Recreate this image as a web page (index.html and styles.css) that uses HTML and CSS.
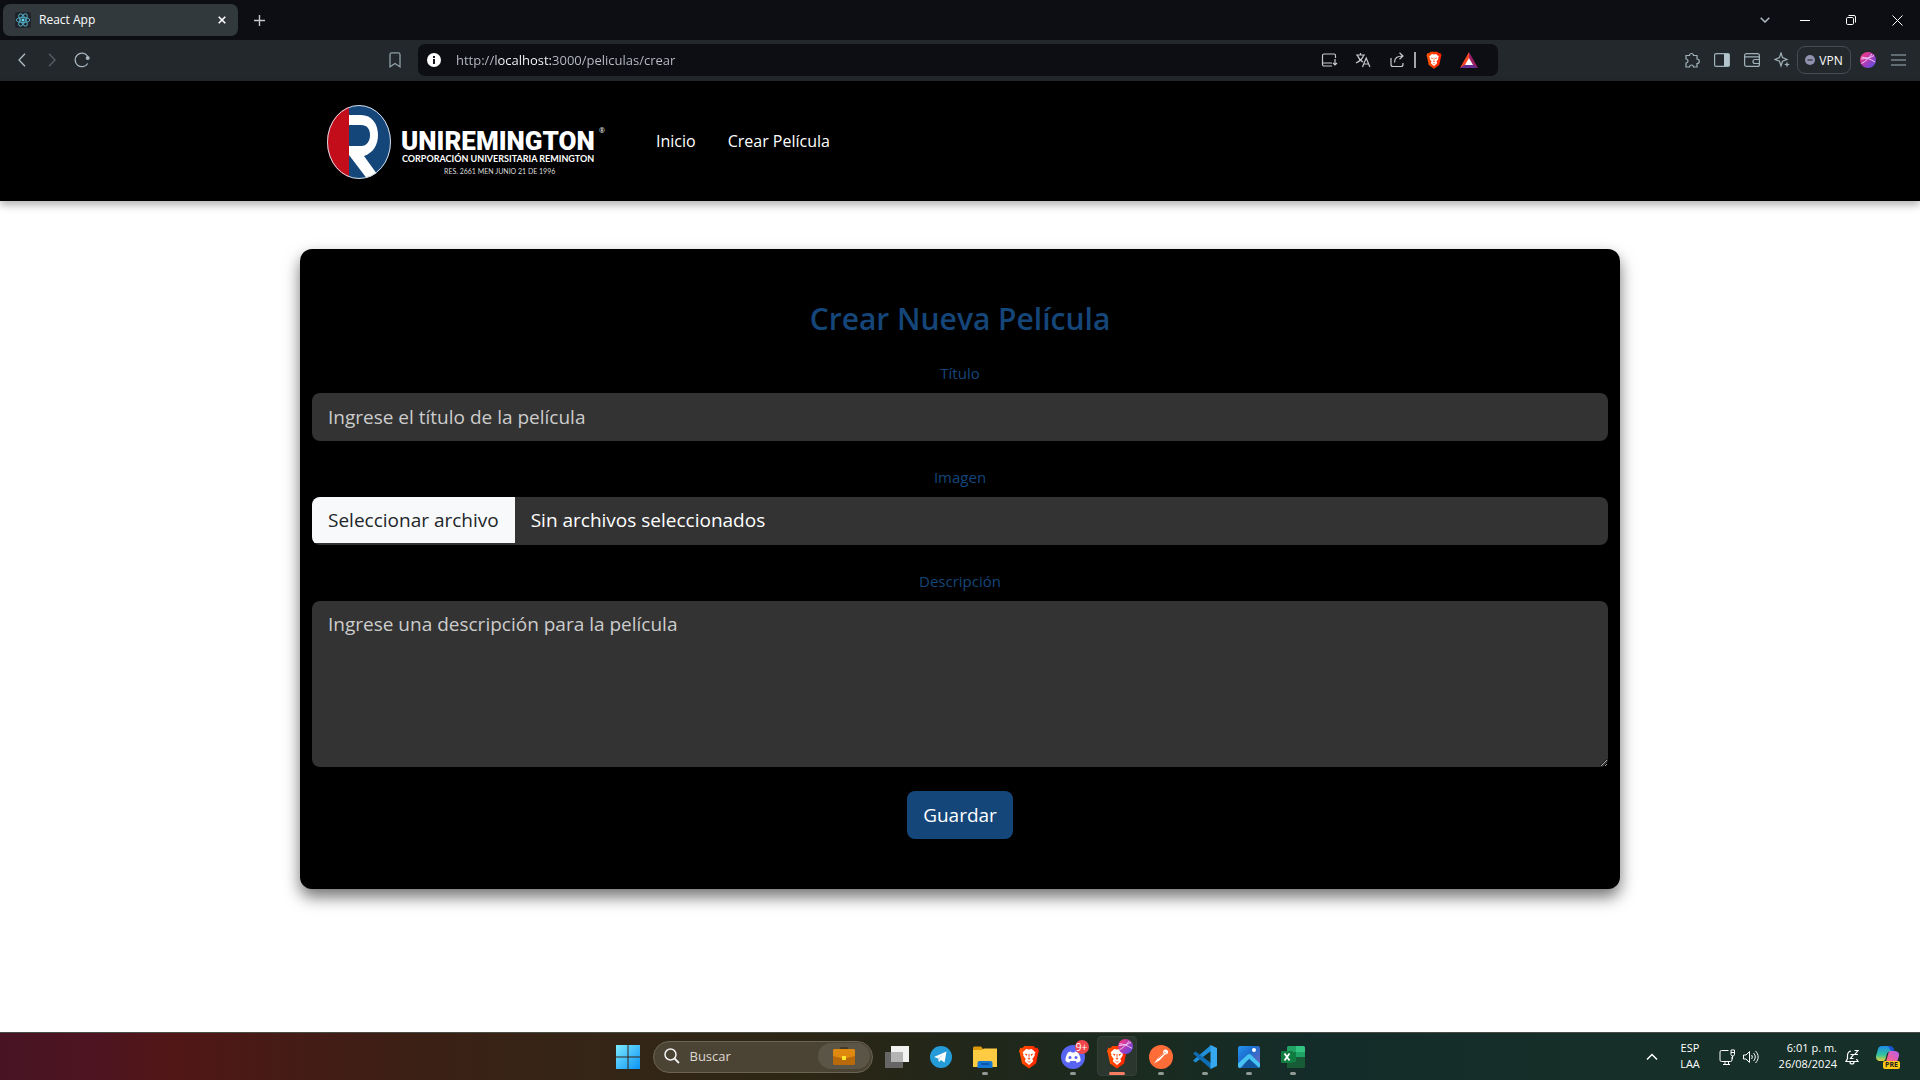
FILE: index.html
```html
<!DOCTYPE html>
<html lang="es">
<head>
<meta charset="utf-8">
<meta name="viewport" content="width=device-width, initial-scale=1">
<title>React App</title>
<link rel="stylesheet" href="styles.css">
</head>
<body>
<svg class="sprite" aria-hidden="true">
  <defs>
    <linearGradient id="orb" x1="0" y1="0" x2="1" y2="1"><stop offset="0.2" stop-color="#e8388c"/><stop offset="0.6" stop-color="#9a3fc4"/><stop offset="1" stop-color="#4a54e8"/></linearGradient>
    <linearGradient id="braveFill" x1="0" y1="0" x2="1" y2="0"><stop offset="0" stop-color="#ff5500"/><stop offset="1" stop-color="#ff2000"/></linearGradient>
    <symbol id="brave" viewBox="0 0 20 24">
      <path d="M5.500 1h9L16.500 3l2-.2L20 6l-.8 2.200L17 18.500 10 23.500 3 18.500.8 8.200 0 6l1.500-3.200 2 .2z" fill="url(#braveFill)"/>
      <path d="M10 4.500l2.800-.5 3.700 3.500-1 1.500.3 1.500-2.500 3.500 1 2-1.500 1.500-2.800 2.500-2.800-2.500-1.500-1.500 1-2-2.500-3.500.3-1.500-1-1.500L7.200 4z" fill="#fff"/>
      <path d="M5.500 8.500l3 .8-1 1.700zM14.500 8.500l-3 .8 1 1.700zM9.500 9h1l-.2 4 1.200.8-1.500 1-1.500-1 1.200-.8zM7.500 15.500l2.500 1.200 2.500-1.200-2.500 2.200z" fill="#ff4a10"/>
    </symbol>
    <symbol id="profile" viewBox="0 0 16 16">
      <circle cx="8" cy="8" r="8" fill="url(#orb)"/>
      <path d="M1.500 5c4 .5 8 1.500 13.500 5M1.500 11.500C5 10 9 6 12 2M1 7c5-.5 9-1 13-3.500" fill="none" stroke="#f3c8f5"/>
    </symbol>
  </defs>
</svg>

<div class="desktop">
  <header class="browser">
    <div class="tabstrip">
      <div class="tab">
        <svg class="favicon" viewBox="0 0 16 16"><rect width="16" height="16" rx="2" fill="#20232a"/><g fill="none" stroke="#4fa9bf"><ellipse cx="8" cy="8" rx="6.800" ry="2.600"/><ellipse cx="8" cy="8" rx="6.800" ry="2.600" transform="rotate(60 8 8)"/><ellipse cx="8" cy="8" rx="6.800" ry="2.600" transform="rotate(120 8 8)"/></g><circle cx="8" cy="8" r="1.500" fill="#61dafb"/></svg>
        <span class="tab-title">React App</span>
        <button class="tab-close" aria-label="Cerrar pestaña"><svg width="8" height="8" viewBox="0 0 8 8"><path d="M.7.7l6.600 6.600M7.300.7L.7 7.300" stroke="#fff" stroke-width="1.600"/></svg></button>
      </div>
      <button class="newtab" aria-label="Nueva pestaña"><svg width="11" height="11" viewBox="0 0 11 11"><path d="M5.500 0v11M0 5.500h11" stroke="#c4c7cb" stroke-width="1.400"/></svg></button>
      <div class="window-controls">
        <button class="list-tabs" aria-label="Buscar pestañas"><svg width="10" height="6" viewBox="0 0 10 6"><path d="M.7.7L5 5 9.300.7" fill="none" stroke="#b0bcc4" stroke-width="1.500"/></svg></button>
        <button aria-label="Minimizar"><svg width="10" height="10" viewBox="0 0 10 10"><path d="M0 5.500h10" stroke="#fff"/></svg></button>
        <button aria-label="Restaurar"><svg width="10" height="10" viewBox="0 0 10 10" fill="none" stroke="#fff"><rect x=".5" y="2.500" width="7" height="7" rx="1.200"/><path d="M2.500.5H8a1.500 1.500 0 0 1 1.500 1.500v5.500"/></svg></button>
        <button aria-label="Cerrar"><svg width="11" height="11" viewBox="0 0 11 11"><path d="M.5.5l10 10M10.500.5l-10 10" stroke="#fff"/></svg></button>
      </div>
    </div>

    <div class="toolbar">
      <div class="nav-buttons">
        <button aria-label="Atrás"><svg width="8" height="14" viewBox="0 0 8 14"><path d="M7 .7L1 7l6 6.300" fill="none" stroke="#b0bec5" stroke-width="1.300"/></svg></button>
        <button aria-label="Adelante"><svg width="8" height="14" viewBox="0 0 8 14"><path d="M1 .7L7 7l-6 6.300" fill="none" stroke="#566068" stroke-width="1.300"/></svg></button>
        <button aria-label="Recargar"><svg width="16" height="16" viewBox="0 0 16 16"><path d="M13.700 11.500A6.800 6.800 0 1 1 13.500 4" fill="none" stroke="#a9b8c0" stroke-width="1.300"/><circle cx="13.700" cy="6" r="2" fill="#a9b8c0"/></svg></button>
      </div>
      <div class="location">
        <button class="bookmark" aria-label="Marcador"><svg width="12" height="16" viewBox="0 0 12 16"><path d="M1 2.500A1.800 1.800 0 0 1 2.800.8h6.400A1.800 1.800 0 0 1 11 2.500v12.300L6 11.500l-5 3.300z" fill="none" stroke="#8fa0a8" stroke-width="1.300"/></svg></button>
        <div class="omnibox">
          <svg class="site-info" width="14" height="14" viewBox="0 0 14 14"><circle cx="7" cy="7" r="7" fill="#fff"/><path d="M7 3v2M7 6v5" stroke="#14161b" stroke-width="2"/></svg>
          <input class="url" type="text" aria-label="Dirección" value="http://localhost:3000/peliculas/crear">
          <button aria-label="Instalar"><svg width="18" height="16" viewBox="0 0 18 16" fill="none" stroke="#c6c9cd" stroke-width="1.200"><path d="M15.500 6V3.500A1.500 1.500 0 0 0 14 2H4a1.500 1.500 0 0 0-1.500 1.500v9A1.500 1.500 0 0 0 4 14h8M2.500 11H12M15 7v6M13 11l2 2 2-2"/></svg></button>
          <button aria-label="Traducir"><svg width="16" height="16" viewBox="0 0 16 16" fill="none" stroke="#c6c9cd" stroke-width="1.200"><path d="M1 3h9M5.500 1v2M2.500 3.500C4 7 6 9 8 10M8.500 3.500C7.500 7 5 9 1 11M7.500 15l3.700-9 3.700 9M9 12h4.500"/></svg></button>
          <button aria-label="Compartir"><svg width="16" height="16" viewBox="0 0 16 16" fill="none" stroke="#c6c9cd" stroke-width="1.200"><path d="M2 6v6.500A2 2 0 0 0 4 14.500h8a2 2 0 0 0 2-2V11M5.500 10.500C5.500 6 8 4 14 4M10.500.8L14 4l-3.500 3.200"/></svg></button>
          <span class="divider"></span>
          <button class="shields" aria-label="Escudos"><svg width="16" height="18"><use href="#brave"/></svg></button>
          <button aria-label="Recompensas"><svg width="18" height="16" viewBox="0 0 18 16"><path d="M9 0L0 16l9-5z" fill="#ff4724"/><path d="M9 0l9 16-9-5z" fill="#9e1f63"/><path d="M0 16h18l-9-6z" fill="#662d91"/><path d="M9 6l-4 7h8z" fill="#fff"/></svg></button>
        </div>
      </div>
      <div class="tools">
        <button aria-label="Extensiones"><svg width="16" height="16" viewBox="0 0 16 16"><path d="M2 3.500h3.500a2 2 0 1 1 4 0H13V7a2 2 0 1 1 0 4.500V15H9.500a2 2 0 0 0-4 0H2v-4a2 2 0 0 0 0-4z" fill="none" stroke="#9fb2ba" stroke-width="1.200"/></svg></button>
        <button aria-label="Barra lateral"><svg width="16" height="14" viewBox="0 0 16 14"><rect x=".6" y=".6" width="14.800" height="12.800" rx="1.500" fill="none" stroke="#9fb2ba" stroke-width="1.200"/><path d="M10 1h5v12h-5z" fill="#b2c5cd"/></svg></button>
        <button aria-label="Cartera"><svg width="16" height="14" viewBox="0 0 16 14" fill="none" stroke="#9fb2ba" stroke-width="1.200"><rect x=".6" y=".6" width="14.800" height="12.800" rx="2"/><path d="M1 3.800h14M15 6.500h-4a2 2 0 0 0 0 4h4"/></svg></button>
        <button aria-label="Leo"><svg width="16" height="16" viewBox="0 0 16 16"><path d="M7 1l1.500 4.500L13 7.500 8.500 9.300 7 14 5.500 9.300 1 7.500l4.500-2z" fill="none" stroke="#9fb2ba" stroke-width="1.200"/><path d="M13 9.500l.8 2.200 2.200.8-2.200.8L13 15.500l-.8-2.200-2.200-.8 2.200-.8z" fill="#9fb2ba"/></svg></button>
        <button class="vpn"><svg width="10" height="10" viewBox="0 0 10 10"><circle cx="5" cy="5" r="5" fill="#8f93ad"/><path d="M2.500 5h5" stroke="#2a2e38" stroke-width="1.200"/></svg>VPN</button>
        <button class="avatar" aria-label="Perfil"><svg width="16" height="16"><use href="#profile"/></svg></button>
        <button aria-label="Menú"><svg width="15" height="12" viewBox="0 0 15 12"><path d="M0 1h15M0 6h15M0 11h15" stroke="#9fb2ba" stroke-width="1.200"/></svg></button>
      </div>
    </div>
  </header>

  <main class="page">
    <nav class="navbar">
      <div class="navbar-inner">
        <a class="brand" href="#" aria-label="Uniremington">
          <svg width="284" height="78" viewBox="0 0 284 78">
            <clipPath id="oval"><ellipse cx="35" cy="40" rx="32" ry="37"/></clipPath>
            <g clip-path="url(#oval)">
              <path d="M0 0h70v78H0z" fill="#15467a"/>
              <path d="M0 0h25v78H0z" fill="#c30d1a"/>
              <path d="M25 13h12c11 0 17 9 17 20 0 10-5 18-14 21l13 18-9 6-19-25V44h12c6 0 9-5 9-11s-3-10-9-10H25z" fill="#fff"/>
            </g>
            <ellipse cx="35" cy="40" rx="31.500" ry="36.500" fill="none" stroke="#d5dbe2"/>
            <text class="brand-name" x="77" y="48">UNIREMINGTON</text>
            <text class="brand-mark" x="275" y="31">®</text>
            <text class="brand-line" x="78" y="60">CORPORACIÓN UNIVERSITARIA REMINGTON</text>
            <text class="brand-note" x="120" y="72">RES. 2661 MEN JUNIO 21 DE 1996</text>
          </svg>
        </a>
        <a class="nav-link" href="#">Inicio</a>
        <a class="nav-link" href="#">Crear Película</a>
      </div>
    </nav>

    <form class="card">
      <h2>Crear Nueva Película</h2>
      <div class="field">
        <label for="titulo">Título</label>
        <input class="control" id="titulo" type="text" placeholder="Ingrese el título de la película">
      </div>
      <div class="field">
        <label for="imagen">Imagen</label>
        <div class="control file">
          <span class="file-button">Seleccionar archivo</span>
          <span class="file-name">Sin archivos seleccionados</span>
          <input class="file-input" id="imagen" type="file">
        </div>
      </div>
      <div class="field">
        <label for="descripcion">Descripción</label>
        <textarea class="control" id="descripcion" rows="5" placeholder="Ingrese una descripción para la película"></textarea>
      </div>
      <button class="submit" type="button">Guardar</button>
    </form>
  </main>

  <footer class="taskbar">
    <div class="apps">
      <button class="app" aria-label="Inicio"><svg width="24" height="24" viewBox="0 0 24 24"><defs><linearGradient id="win" gradientUnits="userSpaceOnUse" x1="0" y1="0" x2="24" y2="24"><stop offset="0" stop-color="#7deaff"/><stop offset="1" stop-color="#0a93f5"/></linearGradient></defs><path d="M0 0h11.500v11.500H0zM12.500 0H24v11.500H12.500zM0 12.500h11.500V24H0zM12.500 12.500H24V24H12.500z" fill="url(#win)"/></svg></button>
      <button class="search">
        <svg width="16" height="16" viewBox="0 0 16 16"><circle cx="6.500" cy="6.500" r="5.500" fill="none" stroke="#f2f2f2" stroke-width="1.500"/><path d="M10.500 10.500l4.500 4.500" stroke="#f2f2f2" stroke-width="1.800"/></svg>
        <span>Buscar</span>
        <span class="highlight"><svg width="22" height="18" viewBox="0 0 22 18"><path d="M8 2.500V1h6v1.500" fill="none" stroke="#43301f" stroke-width="1.500"/><rect y="2" width="22" height="16" rx="1.500" fill="#b8690c"/><path d="M0 3.500A1.500 1.500 0 0 1 1.500 2h19A1.500 1.500 0 0 1 22 3.500V9L14 11H8L0 9z" fill="#df8a0e"/><path d="M9 9h4v4H9z" fill="#ffe52c"/></svg></span>
      </button>
      <button class="app" aria-label="Vista de tareas"><svg width="24" height="22" viewBox="0 0 24 22"><path d="M0 6h18v16H0z" fill="#666"/><path d="M6 0h18v16H6z" fill="#f1f1f1"/><path d="M6 6h12v10H6z" fill="#b4b4b4"/></svg></button>
      <button class="app" aria-label="Telegram"><svg width="22" height="22" viewBox="0 0 22 22"><circle cx="11" cy="11" r="11" fill="#259cd8"/><path d="M4 11l12.500-5.500L14.500 16.500 11 14l-2 2-.8-3.500z" fill="#fff"/><path d="M8.200 12.500l5.500-4.500L9.500 13 9 16z" fill="#b9dff2"/></svg></button>
      <button class="app running" aria-label="Explorador"><svg width="24" height="22" viewBox="0 0 24 22"><path d="M0 2A1.500 1.500 0 0 1 1.500.5H8l3 3.500H0z" fill="#dc9a0c"/><path d="M0 4h9l2-1.500h13V21H0z" fill="#ffcb42"/><path d="M4.500 22v-5a2 2 0 0 1 2-2h11a2 2 0 0 1 2 2v5z" fill="#1376d3"/><path d="M8 18h8" stroke="#0b4c9b" stroke-width="1.500"/></svg></button>
      <button class="app" aria-label="Brave"><svg width="20" height="24"><use href="#brave"/></svg></button>
      <button class="app running" aria-label="Discord"><svg width="24" height="24" viewBox="0 0 24 24"><circle cx="12" cy="12" r="12" fill="#5865f2"/><path d="M7 7.500c1.500-.8 2.500-1 3-1l.7 1h2.600l.7-1c.5 0 1.500.2 3 1 2 3 2.800 6 2.500 8.500-1.500 1.200-2.800 1.500-3.800 1.700l-.9-1.700H9.200l-.9 1.700c-1-.2-2.300-.5-3.800-1.700C4.200 13.500 5 10.500 7 7.500z" fill="#fff"/><circle cx="9" cy="12.500" r="1.500" fill="#5865f2"/><circle cx="15" cy="12.500" r="1.500" fill="#5865f2"/></svg><span class="count">9+</span></button>
      <button class="app running active" aria-label="Brave, React App"><svg width="20" height="24"><use href="#brave"/></svg><svg class="user-dot" width="15" height="15"><use href="#profile"/></svg></button>
      <button class="app running" aria-label="Postman"><svg width="24" height="24" viewBox="0 0 24 24"><circle cx="12" cy="12" r="12" fill="#ff6c37"/><path d="M5 18.500l4-5.500 5.500-5 1.500 1.500-5 5.500z" fill="#fff"/><circle cx="16.500" cy="7" r="2.500" fill="#fff"/><path d="M9 13.500l6-5M15 6.500l2 2" stroke="#ff6c37"/></svg></button>
      <button class="app running" aria-label="Visual Studio Code"><svg width="24" height="24" viewBox="0 0 24 24"><path d="M18 0L0 15.500l2.500 2L18 6z" fill="#1e8fd8"/><path d="M18 24L0 8.500l2.500-2L18 18z" fill="#0f6db5"/><path d="M17.500 0L24 3v18l-6.500 3z" fill="#35a8f0"/></svg></button>
      <button class="app running" aria-label="Fotos"><svg width="22" height="22" viewBox="0 0 22 22"><defs><linearGradient id="pic" x1="0" y1="0" x2="1" y2="1"><stop offset="0" stop-color="#2394ee"/><stop offset=".4" stop-color="#1d6fd0"/><stop offset="1" stop-color="#7a62b8"/></linearGradient></defs><rect width="22" height="22" rx="2" fill="url(#pic)"/><path d="M4 22l8-13 10 9.500V20a2 2 0 0 1-2 2z" fill="#1257a0"/><path d="M0 17.500L9.500 8.700a2.500 2.500 0 0 1 3.400 0L22 17.500V20a2 2 0 0 1-1 1.700l-9.800-8.900L2 22a2 2 0 0 1-2-2z" fill="#45c4f3"/><circle cx="16" cy="4" r="2" fill="#fff"/></svg></button>
      <button class="app running" aria-label="Excel"><svg width="24" height="22" viewBox="0 0 24 22"><path d="M6 1.500A1.500 1.500 0 0 1 7.500 0H15v22H7.500A1.500 1.500 0 0 1 6 20.500z" fill="#21a366"/><path d="M15 0h7.500A1.500 1.500 0 0 1 24 1.500V6h-9z" fill="#33c481"/><path d="M6 6h9v10H6z" fill="#107c41"/><path d="M15 6h9v5h-9z" fill="#21a366"/><path d="M15 11h9v9.500a1.500 1.500 0 0 1-1.500 1.500H7.500A1.500 1.500 0 0 1 6 20.500V16h9z" fill="#185c37"/><rect y="5" width="12" height="12" rx="1" fill="#107c41"/><path d="M3.500 7.500l5 7M8.500 7.500l-5 7" stroke="#fff" stroke-width="1.800"/></svg></button>
    </div>
    <div class="tray">
      <button class="overflow" aria-label="Mostrar iconos ocultos"><svg width="12" height="8" viewBox="0 0 12 8"><path d="M1 6.500l5-5 5 5" fill="none" stroke="#fff" stroke-width="1.500"/></svg></button>
      <button class="language">ESP<br>LAA</button>
      <button class="status" aria-label="Red y sonido">
        <svg width="16" height="16" viewBox="0 0 16 16" fill="none" stroke="#fff"><path d="M9.500 1.500h-7a1.500 1.500 0 0 0-1.500 1.500v8a1.500 1.500 0 0 0 1.500 1.500h9A1.500 1.500 0 0 0 13 11V8M4 15.500h7M6 12.500v3M9.500 12.500v3"/><path d="M12 1h3.500v4.500L14.500 7h-1.500L12 5.500zM12 3.500h3.500M13.500 7v3"/></svg>
        <svg width="16" height="14" viewBox="0 0 16 14" fill="none" stroke="#fff"><path d="M.5 5H3l3.500-3.500v11L3 9H.5zM8.500 5c1 1 1 3 0 4M10.500 3c2.300 2.300 2.300 5.700 0 8M12.500 1c3.500 3.500 3.500 8.500 0 12"/></svg>
      </button>
      <button class="clock">6:01 p. m.<br>26/08/2024</button>
      <button class="bell" aria-label="Notificaciones"><svg width="14" height="16" viewBox="0 0 14 16" fill="none" stroke="#fff" stroke-width="1.200"><path d="M6 2C3.500 2.500 2.500 4.500 2.500 6.500v3L1 12.500h12L11.500 10M5 13a2 2 0 0 0 4 0M5.500 5.500h3l-3 4h3M9.500 1.500h3.500L9.800 5.500H13"/></svg></button>
      <button class="copilot" aria-label="Copilot"><svg width="24" height="24" viewBox="0 0 24 24"><defs><linearGradient id="copA" x1="0" y1="0" x2="0" y2="1"><stop offset="0" stop-color="#1b8be8"/><stop offset=".6" stop-color="#35c49c"/><stop offset="1" stop-color="#e8d23a"/></linearGradient><linearGradient id="copB" x1="1" y1="0" x2="0" y2="1"><stop offset="0" stop-color="#b05ff0"/><stop offset=".6" stop-color="#f0609a"/><stop offset="1" stop-color="#ff9a50"/></linearGradient></defs><path d="M13 6h6a4 4 0 0 1 4 5l-2 6a4 4 0 0 1-4 3H9z" fill="url(#copB)"/><path d="M6 1h6c2 0 2.500 1.500 3 3l.5 2c-3 0-4 1-5 4l-1 4c-.5 1.500-1.500 2-3 2H4a4 4 0 0 1-4-5l2-7a4 4 0 0 1 4-3z" fill="url(#copA)"/><path d="M12 1h2a4 4 0 0 1 4 5h-2.500C14 6 13 2 12 1z" fill="#1a55d0"/></svg><span class="pre">PRE</span></button>
    </div>
  </footer>
</div>
</body>
</html>
```
FILE: styles.css
```css
* { box-sizing: border-box; }

body {
  margin: 0;
  font-family: "Open Sans", "Noto Sans", sans-serif;
  background: #fff;
  color: #fff;
}

button {
  margin: 0;
  padding: 0;
  border: 0;
  background: none;
  color: inherit;
  font: inherit;
  display: flex;
  align-items: center;
  justify-content: center;
}

svg { display: block; flex: none; }

.sprite { position: absolute; width: 0; height: 0; }

.desktop {
  min-height: 100vh;
  display: flex;
  flex-direction: column;
}

/* Browser chrome */
.tabstrip {
  height: 40px;
  padding-left: 3px;
  display: flex;
  align-items: center;
  background: #0d0e13;
}
.tab {
  width: 235px;
  height: 32px;
  padding: 0 12px;
  display: flex;
  align-items: center;
  border-radius: 7px;
  background: #31393d;
}
.favicon { width: 16px; height: 16px; }
.tab-title { flex: 1; margin-left: 8px; font-size: 12px; line-height: 16px; }
.newtab { width: 42px; height: 32px; }
.window-controls { margin-left: auto; display: flex; }
.window-controls button { width: 46px; height: 32px; }
.window-controls .list-tabs { width: 34px; }

.toolbar {
  height: 41px;
  padding-bottom: 1px;
  display: grid;
  grid-template-columns: 380fr 1118fr 422fr;
  align-items: center;
  background: #23282c;
}
.nav-buttons { display: flex; padding-left: 7px; }
.nav-buttons button { width: 30px; height: 30px; }
.location { display: flex; align-items: center; min-width: 0; }
.bookmark { width: 30px; margin-right: 8px; }
.omnibox {
  flex: 1;
  min-width: 0;
  height: 32px;
  padding: 0 12px 0 9px;
  display: flex;
  align-items: center;
  border-radius: 7px;
  background: #0d0e13;
}
.url {
  flex: 1;
  min-width: 0;
  margin-left: 15px;
  padding: 0;
  border: 0;
  outline: 0;
  /* the host name is brighter than the scheme and the path */
  background: linear-gradient(90deg, #bcc0c6 40px, #fff 40px, #fff 97px, #bcc0c6 97px);
  background-clip: text;
  -webkit-background-clip: text;
  color: transparent;
  font: 13px/20px "Open Sans", "Noto Sans", sans-serif;
}
.omnibox button { width: 34px; height: 28px; }
.omnibox .divider { width: 2px; height: 16px; background: #a2a5aa; }
.omnibox .shields { width: 36px; }
.tools { display: flex; align-items: center; justify-content: flex-end; padding-right: 7px; }
.tools button { width: 30px; height: 28px; }
.tools .vpn {
  width: 54px;
  gap: 4px;
  margin-right: 2px;
  border: 1px solid #454c52;
  border-radius: 8px;
  font-size: 12px;
}

/* Page */
.page { flex: 1; }
.navbar {
  background: #000;
  box-shadow: 0 4px 8px rgba(0, 0, 0, 0.3);
}
.navbar-inner {
  max-width: 1320px;
  height: 120px;
  margin: 0 auto;
  padding: 0 24px;
  display: flex;
  align-items: center;
}
.brand { margin-right: 48px; }
.brand-name { font: 900 26px Roboto, sans-serif; fill: #fff; }
.brand-mark { font: 7px "Open Sans", sans-serif; fill: #fff; }
.brand-line { font: bold 9px Lato, sans-serif; fill: #fff; }
.brand-note { font: 7px Lato, sans-serif; fill: #ddd; }
.nav-link {
  margin-right: 32px;
  color: #fff;
  font-size: 16px;
  line-height: 24px;
  text-decoration: none;
}

.card {
  max-width: 1320px;
  margin: 48px auto;
  padding: 50px 12px;
  border-radius: 12px;
  background: #000;
  box-shadow: 0 8px 16px rgba(0, 0, 0, 0.55);
}
h2 {
  margin: 0 0 22px;
  color: #15467a;
  font-size: 30px;
  font-weight: 600;
  line-height: 40px;
  text-align: center;
}
.field { margin-bottom: 24px; }
.field label {
  display: block;
  margin-bottom: 8px;
  color: #15467a;
  font-size: 15px;
  line-height: 24px;
  text-align: center;
}
.control {
  display: block;
  width: 100%;
  min-height: 48px;
  padding: 8px 16px;
  border: 0;
  border-radius: 8px;
  background: #333;
  color: #fff;
  font: 19px/30px "Open Sans", "Noto Sans", sans-serif;
}
.control::placeholder { color: #ccc; opacity: 1; }
textarea.control { resize: vertical; }
.file {
  position: relative;
  display: flex;
  padding: 0;
  overflow: hidden;
}
.file-button {
  height: 46px;
  padding: 8px 16px;
  background: #f8f9fa;
  color: #212529;
}
.file-name { padding: 8px 16px; }
.file-input { position: absolute; inset: 0; width: 100%; opacity: 0; }
.submit {
  margin: 0 auto;
  height: 48px;
  padding: 8px 16px;
  border-radius: 8px;
  background: #15467a;
  font-size: 19px;
  line-height: 30px;
}

/* Taskbar */
.taskbar {
  height: 48px;
  display: grid;
  grid-template-columns: 1fr auto 1fr;
  align-items: center;
  border-top: 1px solid #4a4c48;
  background: linear-gradient(90deg, #481424 0%, #4e1420 5%, #511616 9%, #471a16 14%, #3b2014 22%, #352516 30%, #2c2615 42%, #20271a 51%, #1a2b20 60%, #142c29 68%, #162f28 85%, #162f28 100%);
}
.apps { grid-column: 2; display: flex; align-items: center; }
.app { position: relative; width: 44px; height: 47px; }
.running::after {
  content: "";
  position: absolute;
  left: 19px;
  bottom: 5px;
  width: 6px;
  height: 3px;
  border-radius: 2px;
  background: #909a95;
}
.active::before {
  content: "";
  position: absolute;
  inset: 3px 2px 4px;
  border: 1px solid #343f37;
  border-radius: 4px;
  background: #2b362e;
}
.active svg { position: relative; }
.active.running::after { left: 14px; width: 16px; background: #f77e62; }
.active .user-dot { position: absolute; top: 6px; right: 6px; }
.count {
  position: absolute;
  top: 7px;
  right: 6px;
  width: 14px;
  height: 14px;
  border-radius: 7px;
  background: #f0474c;
  font-size: 10px;
  line-height: 14px;
}
.search {
  width: 220px;
  height: 32px;
  margin: 0 2px 0 3px;
  padding: 0 2px 2px 10px;
  border: 1px solid #6b6354;
  border-radius: 16px;
  background: #4b4334;
  font-size: 13px;
  color: #dedad2;
}
.search span { margin-left: 10px; }
.search .highlight {
  width: 52px;
  height: 26px;
  margin-left: auto;
  display: flex;
  align-items: center;
  justify-content: center;
  border-radius: 13px;
  background: #5b5548;
}
.tray {
  display: flex;
  align-items: center;
  justify-content: flex-end;
  padding-right: 20px;
  font-size: 11px;
  line-height: 16px;
}
.tray button { height: 40px; }
.overflow { width: 34px; }
.language { width: 42px; }
.status { gap: 8px; width: 56px; }
.tray .clock { width: 70px; justify-content: flex-end; text-align: right; }
.tray .clock, .tray .language { padding-bottom: 2px; }
.bell { width: 30px; }
.tray .copilot { position: relative; width: 24px; height: 24px; margin-left: 9px; }
.pre {
  position: absolute;
  right: 0;
  bottom: 0;
  padding: 0 2px;
  border-radius: 2px;
  background: #ffc814;
  color: #222;
  font-size: 7px;
  font-weight: 700;
  line-height: 8px;
}
```
